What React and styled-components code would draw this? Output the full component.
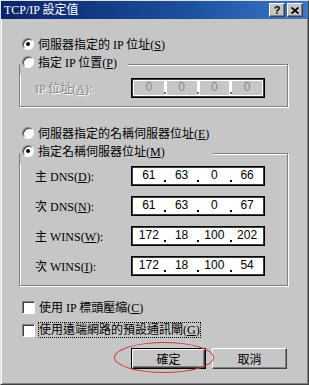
import React from "react";
import styled, { createGlobalStyle } from "styled-components";

const GlobalStyle = createGlobalStyle`
  html, body {
    margin: 0;
    padding: 0;
    background: #c6c6c6;
  }
  * {
    box-sizing: border-box;
  }
`;

const FACE = "#c6c6c6";
const FONT = `"Liberation Serif", "Noto Sans CJK TC", serif`;

const Window = styled.div`
  width: 309px;
  height: 385px;
  background: ${FACE};
  border: 1px solid;
  border-color: #e0e0e0 #404040 #404040 #e0e0e0;
  box-shadow: inset 1px 1px 0 #fff, inset -1px -1px 0 #808080;
  display: flex;
  flex-direction: column;
  font-family: ${FONT};
  font-size: 12px;
  color: #000;
`;

const TitleBar = styled.div`
  height: 18px;
  display: flex;
  align-items: center;
  padding: 0 5px 0 3px;
  background: linear-gradient(90deg, #0a246a 0%, #1c4f9e 60%, #3a78c8 100%);
  color: #fff;
`;

const TitleText = styled.span`
  flex: 1;
  font-size: 12px;
  line-height: 18px;
  white-space: nowrap;
`;

const TitleButton = styled.div`
  width: 16px;
  height: 14px;
  margin-left: 2px;
  background: ${FACE};
  border: 1px solid;
  border-color: #fff #404040 #404040 #fff;
  box-shadow: inset -1px -1px 0 #808080;
  display: flex;
  align-items: center;
  justify-content: center;
  color: #000;
  font-family: "Liberation Sans", sans-serif;
  font-weight: bold;
  font-size: 11px;
  line-height: 1;
`;

const Body = styled.div`
  flex: 1;
  display: flex;
  flex-direction: column;
  padding: 16px 20px 0 18px;
`;

const Choice = styled.label`
  height: 18px;
  display: flex;
  align-items: center;
  gap: 4px;
  padding-left: ${(p) => (p.$inset ? 3 : 0)}px;
  white-space: nowrap;
  margin-top: ${(p) => p.$gap || 0}px;
`;

const Radio = styled.span`
  position: relative;
  width: 12px;
  height: 12px;
  border-radius: 50%;
  background: #fff;
  border: 1px solid;
  border-color: #808080 #fff #fff #808080;
  box-shadow: inset 1px 1px 0 #404040;
  flex: none;

  &::after {
    content: "";
    display: ${(p) => (p.$checked ? "block" : "none")};
    position: absolute;
    left: 3px;
    top: 3px;
    width: 4px;
    height: 4px;
    border-radius: 50%;
    background: #000;
  }
`;

const Check = styled.span`
  width: 13px;
  height: 13px;
  background: #fff;
  border: 1px solid;
  border-color: #808080 #fff #fff #808080;
  box-shadow: inset 1px 1px 0 #404040;
  flex: none;
`;

const Focus = styled.span`
  outline: 1px dotted #000;
  outline-offset: 0;
  line-height: 14px;
`;

const Group = styled.fieldset`
  margin: 0;
  padding: 0;
  border: 1px solid #808080;
  box-shadow: inset 1px 1px 0 #fff, 1px 1px 0 #fff;
  min-width: 0;
`;

const Legend = styled.legend`
  width: ${(p) => p.$width}px;
  padding: 0 0 4px 2px;
  margin: 0;
  background: ${FACE};
`;

const Fields = styled.div`
  display: grid;
  grid-template-columns: 96px 134px;
  row-gap: 10px;
  align-items: center;
  padding: ${(p) => p.$padTop}px 0 ${(p) => p.$padBottom}px 15px;
`;

const FieldLabel = styled.span`
  white-space: nowrap;
  color: ${(p) => (p.$disabled ? "#868686" : "#000")};
  text-shadow: ${(p) => (p.$disabled ? "1px 1px 0 #fff" : "none")};
`;

const IpBox = styled.div`
  width: 134px;
  height: 20px;
  display: flex;
  background: #fff;
  border: 1px solid #000;
  box-shadow: inset 1px 1px 0 #404040, inset -1px -1px 0 #404040;
  padding: 2px;
`;

const Segment = styled.div`
  flex: 1;
  text-align: center;
  font-family: "Liberation Sans", sans-serif;
  font-size: 12px;
  line-height: 13px;
  background: ${(p) => (p.$disabled ? FACE : "#fff")};
  color: ${(p) => (p.$disabled ? "#8a8a8a" : "#000")};
`;

const Dot = styled.div`
  width: 3px;
  display: flex;
  align-items: flex-end;
  justify-content: center;
  padding-bottom: 1px;

  &::after {
    content: "";
    width: 2px;
    height: 2px;
    background: ${(p) => (p.$disabled ? "#6a6a6a" : "#000")};
  }
`;

const ButtonRow = styled.div`
  display: flex;
  justify-content: flex-end;
  gap: 6px;
  margin-top: 9px;
  padding-right: 1px;
`;

const Marked = styled.div`
  position: relative;
`;

const Ellipse = styled.div`
  position: absolute;
  left: -17px;
  top: -6px;
  width: 100px;
  height: 31px;
  border: 1px solid #d23a3a;
  border-radius: 50%;
  pointer-events: none;
`;

const Button = styled.button`
  width: 75px;
  height: 21px;
  padding: 0;
  background: ${FACE};
  font-family: ${FONT};
  font-size: 12px;
  color: #000;
  border: 1px solid;
  border-color: ${(p) => (p.$default ? "#000" : "#fff #404040 #404040 #fff")};
  box-shadow: ${(p) =>
    p.$default
      ? "inset 1px 1px 0 #fff, inset -1px -1px 0 #404040, inset -2px -2px 0 #808080"
      : "inset -1px -1px 0 #808080"};
`;

const IpField = ({ parts, disabled }) => (
  <IpBox>
    {parts.map((v, i) => (
      <React.Fragment key={i}>
        {i > 0 && <Dot $disabled={disabled} />}
        <Segment $disabled={disabled}>{v}</Segment>
      </React.Fragment>
    ))}
  </IpBox>
);

const servers = [
  { pre: "主 DNS", key: "D", ip: ["61", "63", "0", "66"] },
  { pre: "次 DNS", key: "N", ip: ["61", "63", "0", "67"] },
  { pre: "主 WINS", key: "W", ip: ["172", "18", "100", "202"] },
  { pre: "次 WINS", key: "I", ip: ["172", "18", "100", "54"] },
];

export default function App() {
  return (
    <>
      <GlobalStyle />
      <Window>
        <TitleBar>
          <TitleText>TCP/IP 設定值</TitleText>
          <TitleButton>?</TitleButton>
          <TitleButton>
            <svg width="8" height="7" viewBox="0 0 8 7">
              <path d="M0.5 0.5 L7.5 6.5 M7.5 0.5 L0.5 6.5" stroke="#000" strokeWidth="1.8" />
            </svg>
          </TitleButton>
        </TitleBar>
        <Body>
          <Choice $inset>
            <Radio $checked />
            <span>伺服器指定的 IP 位址(<u>S</u>)</span>
          </Choice>
          <Group>
            <Legend $width={108}>
              <Choice>
                <Radio />
                <span>指定 IP 位置(<u>P</u>)</span>
              </Choice>
            </Legend>
            <Fields $padTop={3} $padBottom={8}>
              <FieldLabel $disabled>IP 位址(<u>A</u>):</FieldLabel>
              <IpField parts={["0", "0", "0", "0"]} disabled />
            </Fields>
          </Group>
          <Choice $inset $gap={17}>
            <Radio />
            <span>伺服器指定的名稱伺服器位址(<u>E</u>)</span>
          </Choice>
          <Group>
            <Legend $width={193}>
              <Choice>
                <Radio $checked />
                <span>指定名稱伺服器位址(<u>M</u>)</span>
              </Choice>
            </Legend>
            <Fields $padTop={2} $padBottom={9}>
              {servers.map((s) => (
                <React.Fragment key={s.key}>
                  <FieldLabel>
                    {s.pre}(<u>{s.key}</u>):
                  </FieldLabel>
                  <IpField parts={s.ip} />
                </React.Fragment>
              ))}
            </Fields>
          </Group>
          <Choice $inset $gap={12}>
            <Check />
            <span>使用 IP 標頭壓縮(<u>C</u>)</span>
          </Choice>
          <Choice $inset $gap={5}>
            <Check />
            <Focus>使用遠端網路的預設通訊閘(<u>G</u>)</Focus>
          </Choice>
          <ButtonRow>
            <Marked>
              <Button $default>確定</Button>
              <Ellipse />
            </Marked>
            <Button>取消</Button>
          </ButtonRow>
        </Body>
      </Window>
    </>
  );
}
